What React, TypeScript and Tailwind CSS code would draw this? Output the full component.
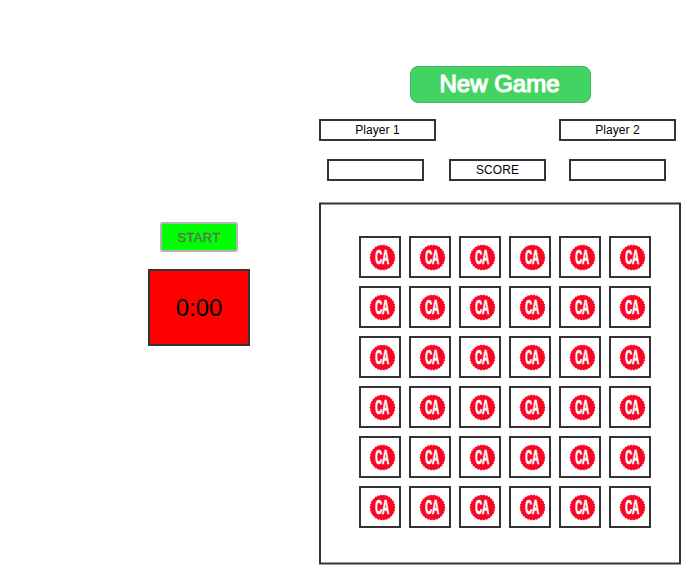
import React from "react";

const outer = Array.from({ length: 52 }, (_, i) => {
  const a = (i * Math.PI) / 26;
  const r = i % 2 === 0 ? 13 : 12;
  return `${(12.5 + r * Math.cos(a)).toFixed(2)},${(12.5 + r * Math.sin(a)).toFixed(2)}`;
}).join(" ");

function Badge() {
  return (
    <svg className="ml-[5px] mt-px h-[25px] w-[25px] overflow-visible" viewBox="0 0 25 25">
      <polygon points={outer} fill="#fb0524" />
      <g fill="#fff" stroke="#fff" strokeWidth="0.7" fontFamily="Liberation Sans, Arial, sans-serif" fontWeight="700" fontSize="20">
        <text transform="translate(5.2 19) scale(0.48 1)">C</text>
        <text transform="translate(11.9 19.4) scale(0.5 1)">A</text>
      </g>
    </svg>
  );
}

function Box({ className, children }: { className: string; children?: React.ReactNode }) {
  return (
    <div className={`flex h-[22px] items-center justify-center border-2 border-[#333] text-[12px] leading-none tracking-[0.05px] ${className}`}>
      {children}
    </div>
  );
}

export default function App() {
  return (
    <div className="flex h-[583px] w-[700px] items-start overflow-hidden bg-white font-['Liberation_Sans',Arial,sans-serif] text-black">
      <aside className="ml-[148px] mt-[222px] flex w-[102px] flex-col items-center">
        <button className="h-[30px] w-[78px] rounded-[3px] border-2 border-[#b4b4b4] bg-[#00ff00] text-[13px] leading-none tracking-[0.3px] text-[#666] [-webkit-text-stroke:0.3px_#666]">
          START
        </button>
        <div className="mt-[17px] flex h-[77px] w-[102px] items-center justify-center border-2 border-[#333] bg-[#ff0000] text-[24px] leading-none">
          0:00
        </div>
      </aside>
      <main className="ml-[69px] mt-[66px] w-[362px]">
        <button className="ml-[91px] block h-[37px] w-[181px] rounded-[8px] border border-[#3cb85a] bg-[#42d462] pb-[2px] pr-[2px] text-[24px] leading-none text-white [-webkit-text-stroke:1.2px_white]">
          New Game
        </button>
        <div className="mt-4 flex justify-between pr-[5px]">
          <Box className="w-[117px]">Player 1</Box>
          <Box className="w-[117px]">Player 2</Box>
        </div>
        <div className="mt-[18px] flex pl-2">
          <Box className="w-[97px]" />
          <Box className="ml-[25px] w-[97px]">SCORE</Box>
          <Box className="ml-[23px] w-[97px]" />
        </div>
        <div className="mt-[22px] h-[361px] w-[362px] border-x-2 border-y border-[#333] pl-[38px] pt-[32px] shadow-[0_-1px_0_#999,0_1px_0_#999,inset_0_1px_0_#999,inset_0_-1px_0_#999]">
          <div className="grid w-[292px] grid-cols-6 gap-2">
            {Array.from({ length: 36 }, (_, i) => (
              <div key={i} className="flex h-[42px] w-[42px] items-center justify-center border-2 border-[#333]">
                <Badge />
              </div>
            ))}
          </div>
        </div>
      </main>
    </div>
  );
}
